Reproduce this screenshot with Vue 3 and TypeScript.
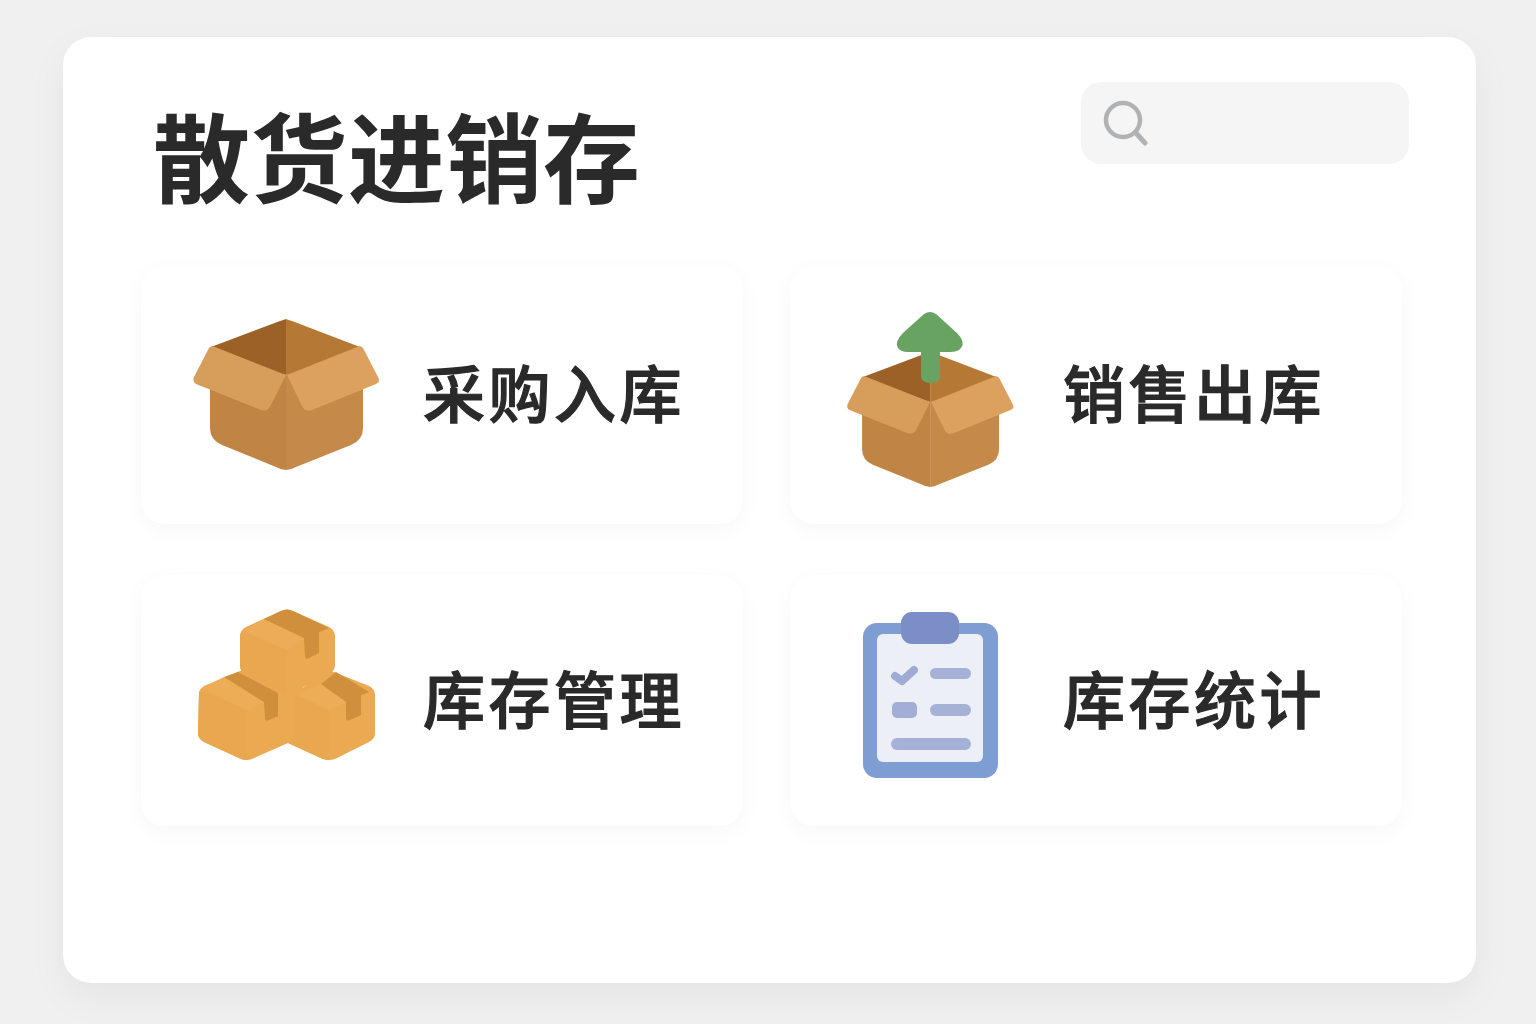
<script setup lang="ts">
interface Face {
  d: string
  fill: string
}

// open carton, drawn once and reused for the two top cards
const cartonFaces: Face[] = [
  { d: 'M19 29 L88 3 Q94 1 94 1 L94 58 Z', fill: '#9c6126' },
  { d: 'M168 29 L100 3 Q94 1 94 1 L94 58 Z', fill: '#b67935' },
  { d: 'M18 50 L94 56 L94 152 Q89 152 84 149 L30 127 Q18 122 18 110 Z', fill: '#c08545' },
  { d: 'M171 50 L94 56 L94 152 Q99 152 104 149 L159 127 Q171 122 171 110 Z', fill: '#c58a4a' },
  { d: 'M17 30 Q19 27 23 29 L94 57 L79 87 Q76 94 69 92 L4 66 Q0 64 2 59 Z', fill: '#d69d5b' },
  { d: 'M171 30 Q169 27 165 29 L95 57 L110 88 Q113 94 120 92 L184 66 Q189 64 186 59 Z', fill: '#dca15e' },
]

const stackFaces: Face[] = [
  // left box
  { d: 'M43 64 Q49 62 55 65 L90 78 L106 78 L100 131 L91 136 L55 152 Q50 154 44 152 L7 135 Q1 132 1 126 L2 87 Q2 82 7 79 Z', fill: '#eba952' },
  { d: 'M1 126 L2 84 L50 103 L50 153 Q47 153 44 152 L7 135 Q1 132 1 126 Z', fill: '#e9a750' },
  { d: 'M5 81 L27 70 L67 95 L50 103 Z', fill: '#edad58' },
  { d: 'M27 70 L41 65 L81 86 L81 109 L72 113 Q68 115 68 111 L67 95 Z', fill: '#cf8f3c' },
  // right box
  { d: 'M125 65 Q131 62 137 65 L172 79 Q178 82 178 88 L178 126 Q178 132 172 135 L138 152 Q132 154 126 152 L91 136 L97 132 L97 88 Z', fill: '#eba952' },
  { d: 'M97 132 L97 88 L132 103 L132 153 Q129 153 126 152 L91 136 Z', fill: '#e9a750' },
  { d: 'M100 88 L124 77 L149 95 L132 103 Z', fill: '#edad58' },
  { d: 'M124 77 L139 65 L172 85 L164 88 L164 108 L153 113 Q149 115 149 111 L149 95 Z', fill: '#cf8f3c' },
  // top box
  { d: 'M84 4 Q90 1 96 4 L132 20 Q138 23 138 30 L138 58 Q138 64 132 67 L96 85 Q90 88 84 85 L49 68 Q43 65 43 58 L43 30 Q43 23 49 20 Z', fill: '#eba952' },
  { d: 'M43 58 L43 30 Q43 26 46 24 L90 43 L90 87 Q87 87 84 85 L49 68 Q43 65 43 58 Z', fill: '#e9a750' },
  { d: 'M46 24 L67 12 L107 31 L90 43 Z', fill: '#edad58' },
  { d: 'M67 12 L84 4 Q90 1 96 4 L132 21 L122 25 L122 46 L112 51 Q108 53 108 49 L107 31 Z', fill: '#cf8f3c' },
]

const cards = [
  { title: '采购入库', icon: 'carton' },
  { title: '销售出库', icon: 'upload' },
  { title: '库存管理', icon: 'stack' },
  { title: '库存统计', icon: 'clipboard' },
]
</script>

<template>
  <div class="page">
    <main class="panel">
      <header class="head">
        <h1 class="title">散货进销存</h1>
        <label class="search">
          <svg width="46" height="46" viewBox="0 0 46 46" fill="none" stroke="#b0b2b3" stroke-linecap="round">
            <circle cx="20" cy="20" r="17" stroke-width="4.5" />
            <path d="M33 33 L42 43" stroke-width="5" />
          </svg>
          <input class="search-input" type="text" aria-label="搜索" />
        </label>
      </header>

      <section class="grid">
        <article v-for="card in cards" :key="card.title" class="card" :class="card.icon">
          <div class="icon">
            <svg v-if="card.icon === 'carton'" width="190" height="154" viewBox="0 0 190 154">
              <path v-for="f in cartonFaces" :key="f.d" :d="f.d" :fill="f.fill" />
            </svg>

            <svg v-else-if="card.icon === 'upload'" width="170" height="190" viewBox="0 0 170 190">
              <g transform="translate(0 51) scale(0.895)">
                <path v-for="f in cartonFaces" :key="f.d" :d="f.d" :fill="f.fill" />
              </g>
              <path
                d="M78 14 Q84 10 90 14 L111 33 Q120 42 115 48 Q112 52 104 52 L94 52 L94 76 Q94 83 85 83 Q75 83 75 76 L75 52 L62 52 Q55 52 52 48 Q48 42 57 33 Z"
                fill="#68a362"
              />
            </svg>

            <svg v-else-if="card.icon === 'stack'" width="180" height="155" viewBox="0 0 180 155">
              <path v-for="f in stackFaces" :key="f.d" :d="f.d" :fill="f.fill" />
            </svg>

            <svg v-else width="142" height="172" viewBox="0 0 142 172">
              <rect x="3" y="13" width="135" height="155" rx="14" fill="#7d9dd3" />
              <rect x="17" y="24" width="106" height="128" rx="6" fill="#edeff7" />
              <rect x="41" y="2" width="58" height="32" rx="11" fill="#7b8fc6" />
              <path d="M35 66 L42 71 L54 60" fill="none" stroke="#9fabd2" stroke-width="8" stroke-linecap="round" stroke-linejoin="round" />
              <rect x="70" y="58" width="41" height="11" rx="5.5" fill="#a5b2d6" />
              <rect x="32" y="92" width="25" height="16" rx="5" fill="#a2aed5" />
              <rect x="70" y="94" width="41" height="12" rx="6" fill="#a5b2d6" />
              <rect x="31" y="128" width="80" height="12" rx="6" fill="#a7b1d8" />
            </svg>
          </div>
          <span class="label">{{ card.title }}</span>
        </article>
      </section>
    </main>
  </div>
</template>

<style>
html,
body {
  margin: 0;
  background: #f0f0f1;
}
</style>

<style scoped>
.page {
  box-sizing: border-box;
  height: 1024px;
  padding: 37px 60px 41px 63px;
  font-family: "Noto Sans CJK SC", "Noto Sans", sans-serif;
  color: #2a2a2a;
  overflow: hidden;
}

.panel {
  box-sizing: border-box;
  height: 946px;
  padding: 45px 67px 0 78px;
  background: #fff;
  border-radius: 28px;
  box-shadow: 0 14px 40px rgba(0, 0, 0, 0.05);
}

.head {
  display: flex;
  justify-content: space-between;
  align-items: flex-start;
  height: 183px;
}

.title {
  margin: 0;
  padding-left: 12px;
  font-size: 97px;
  font-weight: 700;
  letter-spacing: 0.5px;
  line-height: 1.47;
}

.search {
  display: flex;
  align-items: center;
  gap: 8px;
  box-sizing: border-box;
  width: 328px;
  height: 82px;
  padding: 0 14px 0 22px;
  background: #f5f5f6;
  border-radius: 20px;
}

.search-input {
  flex: 1;
  min-width: 0;
  border: 0;
  outline: 0;
  background: transparent;
}

.grid {
  display: grid;
  grid-template-columns: 602px 612px;
  grid-template-rows: 259px 251px;
  gap: 51px 47px;
}

.card {
  display: flex;
  align-items: center;
  padding-left: 6px;
  background: #fff;
  border-radius: 24px;
  box-shadow: 0 6px 22px rgba(0, 0, 0, 0.035);
}

.icon {
  display: flex;
  justify-content: center;
  flex: none;
  width: 279px;
}

.upload .icon,
.clipboard .icon {
  width: 270px;
}

.stack .icon {
  margin-bottom: 32px;
}

.clipboard .icon {
  margin-bottom: 9px;
}

.icon svg {
  display: block;
}

.label {
  margin: 0 0 7px -3px;
  font-size: 62px;
  font-weight: 500;
  letter-spacing: 3.5px;
  line-height: 1;
  -webkit-text-stroke: 1.2px #2a2a2a;
}
</style>
